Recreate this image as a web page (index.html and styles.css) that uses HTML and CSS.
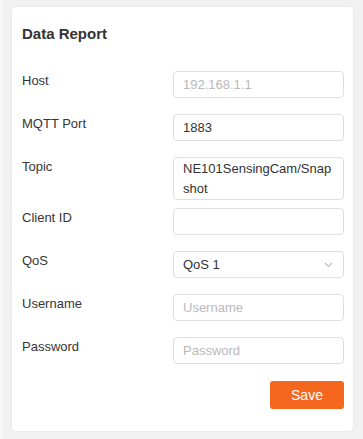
FILE: index.html
```html
<!DOCTYPE html>
<html lang="en">
<head>
    <meta charset="UTF-8">
    <meta name="viewport" content="width=device-width, initial-scale=1.0">
    <title>Data Report</title>
    <link rel="stylesheet" href="styles.css">
</head>
<body>
    <div class="page">
        <div class="card">
            <h2 class="card-title">Data Report</h2>

            <form class="report-form">
                <div class="form-row">
                    <label for="host">Host</label>
                    <input type="text" id="host" placeholder="192.168.1.1">
                </div>
                <div class="form-row">
                    <label for="port">MQTT Port</label>
                    <input type="text" id="port" value="1883">
                </div>
                <div class="form-row form-row-tall">
                    <label for="topic">Topic</label>
                    <textarea id="topic" rows="2">NE101SensingCam/Snapshot</textarea>
                </div>
                <div class="form-row">
                    <label for="client-id">Client ID</label>
                    <input type="text" id="client-id">
                </div>
                <div class="form-row">
                    <label for="qos">QoS</label>
                    <div class="select-wrap">
                        <select id="qos">
                            <option value="0">QoS 0</option>
                            <option value="1" selected>QoS 1</option>
                            <option value="2">QoS 2</option>
                        </select>
                        <svg class="chevron" width="9" height="6" viewBox="0 0 9 6">
                            <path d="M1 1l3.5 3.5L8 1" fill="none" stroke="#bcbcbc" stroke-width="1.1"/>
                        </svg>
                    </div>
                </div>
                <div class="form-row">
                    <label for="username">Username</label>
                    <input type="text" id="username" placeholder="Username">
                </div>
                <div class="form-row">
                    <label for="password">Password</label>
                    <input type="password" id="password" placeholder="Password">
                </div>
                <div class="form-actions">
                    <button type="button" id="save-btn">Save</button>
                </div>
            </form>
        </div>
    </div>
</body>
</html>
```

FILE: styles.css
```css
html, body {
    margin: 0;
    padding: 0;
    height: 100%;
}
body {
    font-family: 'Liberation Sans', Arial, sans-serif;
    color: #333;
    background-color: #f1f1f1;
}
.page {
    border-left: 3px solid #f8f8f8;
    padding: 6px 9px 8px 8px;
    min-height: 100%;
    box-sizing: border-box;
}
.card {
    background-color: white;
    border: 1px solid #ebebeb;
    border-radius: 5px;
    padding: 16px 9px 22px 10px;
}
.card-title {
    margin: 0 0 26px 0;
    font-size: 15px;
    line-height: 22px;
    font-weight: bold;
    color: #333;
}
.form-row {
    display: flex;
    align-items: flex-start;
    justify-content: space-between;
    margin-bottom: 16px;
}
.form-row-tall {
    margin-bottom: 8px;
}
.form-row label {
    font-size: 13px;
    line-height: 20px;
    color: #363636;
}
input, select, textarea {
    width: 171px;
    height: 27px;
    box-sizing: border-box;
    border: 1px solid #dedede;
    border-radius: 4px;
    padding: 0 9px;
    font-family: inherit;
    font-size: 13px;
    color: #333;
    background-color: white;
    outline: none;
}
input::placeholder {
    color: #b9b9b9;
}
textarea {
    height: 43px;
    padding: 1px 9px;
    line-height: 20px;
    resize: none;
    overflow: hidden;
}
.select-wrap {
    position: relative;
}
select {
    appearance: none;
    -webkit-appearance: none;
}
.chevron {
    position: absolute;
    right: 11px;
    top: 11px;
    pointer-events: none;
}
.form-actions {
    display: flex;
    justify-content: flex-end;
    padding-top: 1px;
}
button {
    background-color: #f5671f;
    color: white;
    border: none;
    width: 74px;
    height: 28px;
    border-radius: 3px;
    font-family: inherit;
    font-size: 14px;
    cursor: pointer;
}
button:hover {
    background-color: #e85b14;
}
```
